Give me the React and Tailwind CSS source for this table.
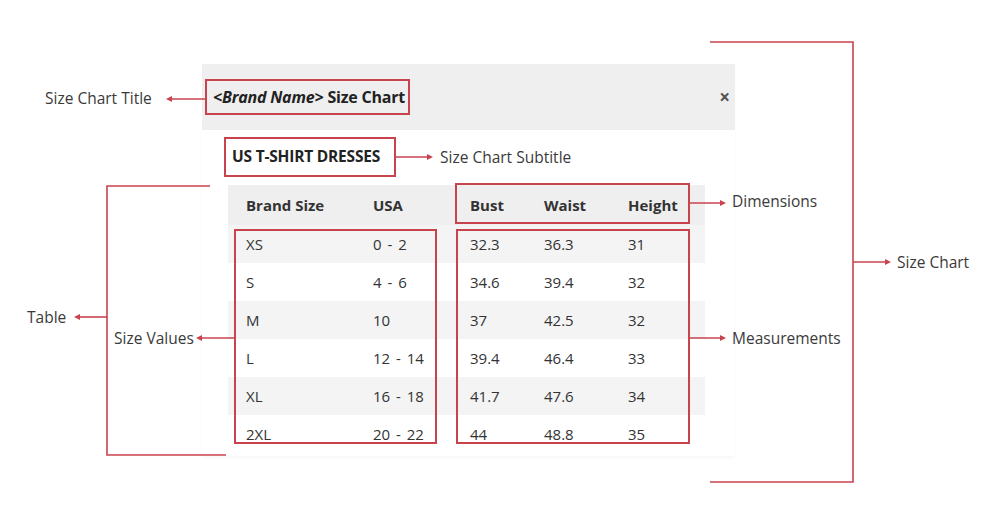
import React from "react";

const red = "#c9434f";

const rows = [
  ["XS", "0 - 2", "32.3", "36.3", "31"],
  ["S", "4 - 6", "34.6", "39.4", "32"],
  ["M", "10", "37", "42.5", "32"],
  ["L", "12 - 14", "39.4", "46.4", "33"],
  ["XL", "16 - 18", "41.7", "47.6", "34"],
  ["2XL", "20 - 22", "44", "48.8", "35"],
];

const labels = [
  { text: "Size Chart Title", cls: "left-[45px] top-[88px]" },
  { text: "Size Chart Subtitle", cls: "left-[440px] top-[147px]" },
  { text: "Dimensions", cls: "left-[732px] top-[191px]" },
  { text: "Size Chart", cls: "left-[897px] top-[252px]" },
  { text: "Table", cls: "left-[27px] top-[307px]" },
  { text: "Size Values", cls: "left-[114px] top-[328px]" },
  { text: "Measurements", cls: "left-[732px] top-[328px]" },
];

function headRight(x, y) {
  return `${x},${y} ${x - 6},${y - 3} ${x - 6},${y + 3}`;
}

function headLeft(x, y) {
  return `${x},${y} ${x + 6},${y - 3} ${x + 6},${y + 3}`;
}

function Annotations() {
  return (
    <svg
      className="absolute left-0 top-0 pointer-events-none"
      width="982"
      height="519"
      viewBox="0 0 982 519"
    >
      <g stroke={red} strokeWidth="1.6" fill="none">
        {/* title */}
        <line x1="168" y1="99" x2="205" y2="99" />
        {/* subtitle */}
        <line x1="396" y1="157" x2="431" y2="157" />
        {/* dimensions */}
        <line x1="690" y1="203" x2="724" y2="203" />
        {/* measurements */}
        <line x1="690" y1="338" x2="724" y2="338" />
        {/* size values */}
        <line x1="198" y1="338" x2="234" y2="338" />
        {/* table bracket */}
        <polyline points="210,186 107,186 107,455 226,455" />
        <line x1="76" y1="317" x2="107" y2="317" />
        {/* size chart bracket */}
        <polyline points="710,42 853,42 853,482 710,482" />
        <line x1="853" y1="262" x2="889" y2="262" />
      </g>
      <g fill={red}>
        <polygon points={headLeft(166, 99)} />
        <polygon points={headRight(433, 157)} />
        <polygon points={headRight(726, 203)} />
        <polygon points={headRight(726, 338)} />
        <polygon points={headLeft(196, 338)} />
        <polygon points={headLeft(74, 317)} />
        <polygon points={headRight(891, 262)} />
      </g>
    </svg>
  );
}

export default function App() {
  return (
    <div
      className="relative w-[982px] h-[519px] bg-white overflow-hidden"
      style={{ fontFamily: '"Open Sans", "Liberation Sans", sans-serif' }}
    >

      <div className="ml-[202px] pt-[64px] w-[533px]">

        <div className="h-[66px] bg-[#efefef] flex items-center justify-between pl-[3px] pr-[5px]">

          <div className="w-[205px] h-[36px] border-2 border-[#c9434f] flex items-center pl-[6px] text-[16px] font-bold text-[#222] whitespace-nowrap tracking-[-0.2px]">
            <span className="italic">&lt;Brand Name&gt;</span>
            <span className="ml-[4px]">Size Chart</span>
          </div>

          <span className="text-[19px] font-bold text-[#555] leading-none">×</span>

        </div>


        <div className="bg-white pl-[22px] pt-[7px] pb-[3px] shadow-[0_2px_3px_rgba(0,0,0,0.03)]">

          <div className="w-[172px] h-[40px] border-2 border-[#c9434f] flex items-center pl-[6px] text-[15.5px] font-bold text-[#222] whitespace-nowrap tracking-[-0.2px]">
            US T-SHIRT DRESSES
          </div>


          <div className="relative mt-[8px] ml-[4px] w-[477px] text-[15px] text-[#333]">

            <div className="h-[40px] bg-[#efefef] grid grid-cols-[127px_97px_74px_84px_1fr] items-center pl-[18px] font-bold">
              <span>Brand Size</span>
              <span>USA</span>
              <span>Bust</span>
              <span>Waist</span>
              <span>Height</span>
            </div>

            {
              rows.map((row, i) => (
                <div
                  key={row[0]}
                  className={
                    i % 2 === 0
                      ? "h-[38px] bg-[#f4f4f4] grid grid-cols-[127px_97px_74px_84px_1fr] items-center pl-[18px]"
                      : "h-[38px] bg-white grid grid-cols-[127px_97px_74px_84px_1fr] items-center pl-[18px]"
                  }
                >
                  {
                    row.map((cell, j) => (
                      <span key={j} className="[word-spacing:2px]">{cell}</span>
                    ))
                  }
                </div>
              ))
            }

            {/* red highlight boxes */}
            <div className="absolute left-[227px] top-[-2px] w-[235px] h-[41px] border-2 border-[#c9434f]" />
            <div className="absolute left-[6px] top-[44px] w-[203px] h-[215px] border-2 border-[#c9434f]" />
            <div className="absolute left-[228px] top-[44px] w-[234px] h-[215px] border-2 border-[#c9434f]" />

          </div>

        </div>

      </div>


      <Annotations />

      {
        labels.map((l) => (
          <div
            key={l.text}
            className={"absolute leading-5 text-[15.5px] text-[#3a3a3a] whitespace-nowrap " + l.cls}
          >
            {l.text}
          </div>
        ))
      }

    </div>
  );
}
